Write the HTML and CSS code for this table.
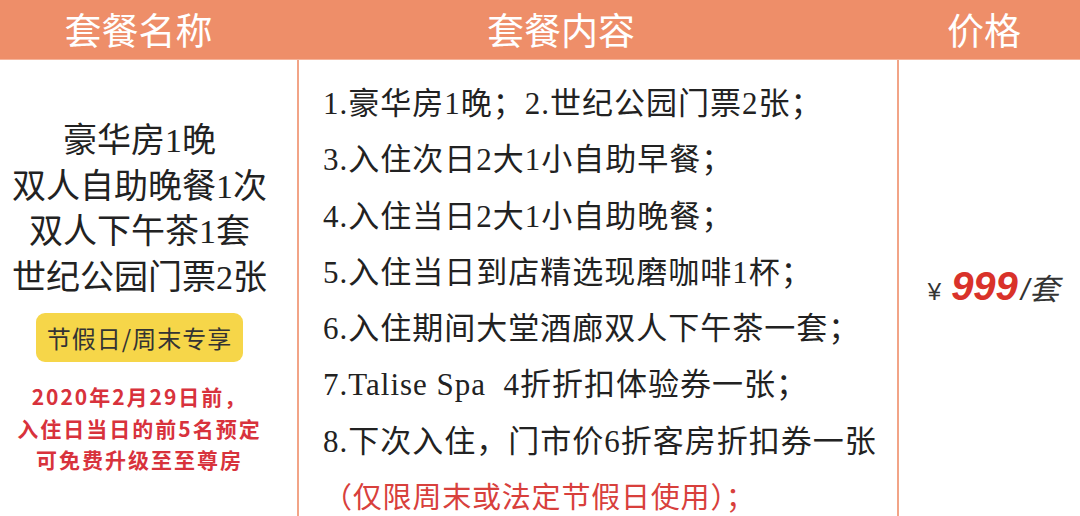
FILE: index.html
```html
<!DOCTYPE html>
<html lang="zh-CN">
<head>
<meta charset="utf-8">
<link rel="stylesheet" href="styles.css">
</head>
<body>
<div class="table">
  <div class="head">
    <div class="hc hc1">套餐名称</div>
    <div class="hc hc2">套餐内容</div>
    <div class="hc hc3">价格</div>
  </div>
  <div class="body">
    <div class="c1">
      <div class="names">
        <div>豪华房1晚</div>
        <div>双人自助晚餐1次</div>
        <div>双人下午茶1套</div>
        <div>世纪公园门票2张</div>
      </div>
      <div class="badge">节假日/周末专享</div>
      <div class="note">
        <div>2020年2月29日前，</div>
        <div>入住日当日的前5名预定</div>
        <div>可免费升级至至尊房</div>
      </div>
    </div>
    <div class="c2">
      <div class="line">1.豪华房1晚；2.世纪公园门票2张；</div>
      <div class="line">3.入住次日2大1小自助早餐；</div>
      <div class="line">4.入住当日2大1小自助晚餐；</div>
      <div class="line">5.入住当日到店精选现磨咖啡1杯；</div>
      <div class="line">6.入住期间大堂酒廊双人下午茶一套；</div>
      <div class="line">7.Talise Spa&nbsp;&nbsp;4折折扣体验券一张；</div>
      <div class="line">8.下次入住，门市价6折客房折扣券一张</div>
      <div class="line red">（仅限周末或法定节假日使用）；</div>
    </div>
    <div class="c3">
      <div class="price"><span class="yen">¥</span><span class="num">999</span><span class="unit">/套</span></div>
    </div>
  </div>
</div>
</body>
</html>
```
FILE: styles.css
```css
html, body {
  margin: 0;
  padding: 0;
  background: #ffffff;
}
body {
  width: 1080px;
  height: 516px;
  overflow: hidden;
  font-family: "Liberation Serif", "Noto Sans CJK SC", serif;
  color: #222;
}
.table {
  width: 1080px;
}
.head {
  display: flex;
  height: 59px;
  background: #ee8e69;
  border-bottom: 1px solid #f5b49b;
}
.hc {
  color: #fff;
  font-size: 37px;
  line-height: 59px;
  text-align: center;
  font-family: "Noto Sans CJK SC", sans-serif;
}
.hc1 { width: 277px; padding-right: 20px; }
.hc2 { width: 528px; padding-right: 70px; }
.hc3 { width: 178px; padding-right: 6px; }
.body {
  display: flex;
  height: 456px;
}
.c1 {
  width: 279px;
  padding-right: 18px;
  border-right: 2px solid #f2a487;
  display: flex;
  flex-direction: column;
  align-items: center;
  justify-content: center;
  padding-top: 18px;
}
.names {
  font-size: 34px;
  line-height: 45.5px;
  text-align: center;
  white-space: nowrap;
}
.badge {
  margin-top: 13px;
  width: 207px;
  height: 49px;
  box-sizing: border-box;
  background: #f6d649;
  border-radius: 9px;
  font-size: 24px;
  line-height: 49px;
  text-align: center;
  color: #333;
  letter-spacing: 1px;
  font-family: "Noto Sans CJK SC", sans-serif;
}
.note {
  margin-top: 19px;
  color: #d8323c;
  font-size: 21px;
  font-weight: bold;
  line-height: 31.5px;
  letter-spacing: 2px;
  text-align: center;
  white-space: nowrap;
  font-family: "Noto Sans CJK SC", sans-serif;
}
.c2 {
  width: 574px;
  padding: 16px 0 0 24px;
  border-right: 2px solid #f2a487;
}
.line {
  font-size: 31px;
  line-height: 56.3px;
  letter-spacing: 1px;
  white-space: nowrap;
}
.line.red {
  color: #d8403c;
  font-size: 29px;
  letter-spacing: 0.8px;
}
.c3 {
  flex: 1;
  display: flex;
  align-items: center;
  justify-content: center;
  padding-left: 8px;
  padding-bottom: 4px;
}
.price {
  display: flex;
  align-items: baseline;
  font-family: "Liberation Sans", "Noto Sans CJK SC", sans-serif;
  color: #333;
}
.yen {
  font-size: 24px;
  margin-right: 10px;
}
.num {
  color: #d9322a;
  font-size: 40px;
  font-style: italic;
  font-weight: bold;
}
.unit {
  font-size: 30px;
  font-style: italic;
  margin-left: 3px;
}
```
